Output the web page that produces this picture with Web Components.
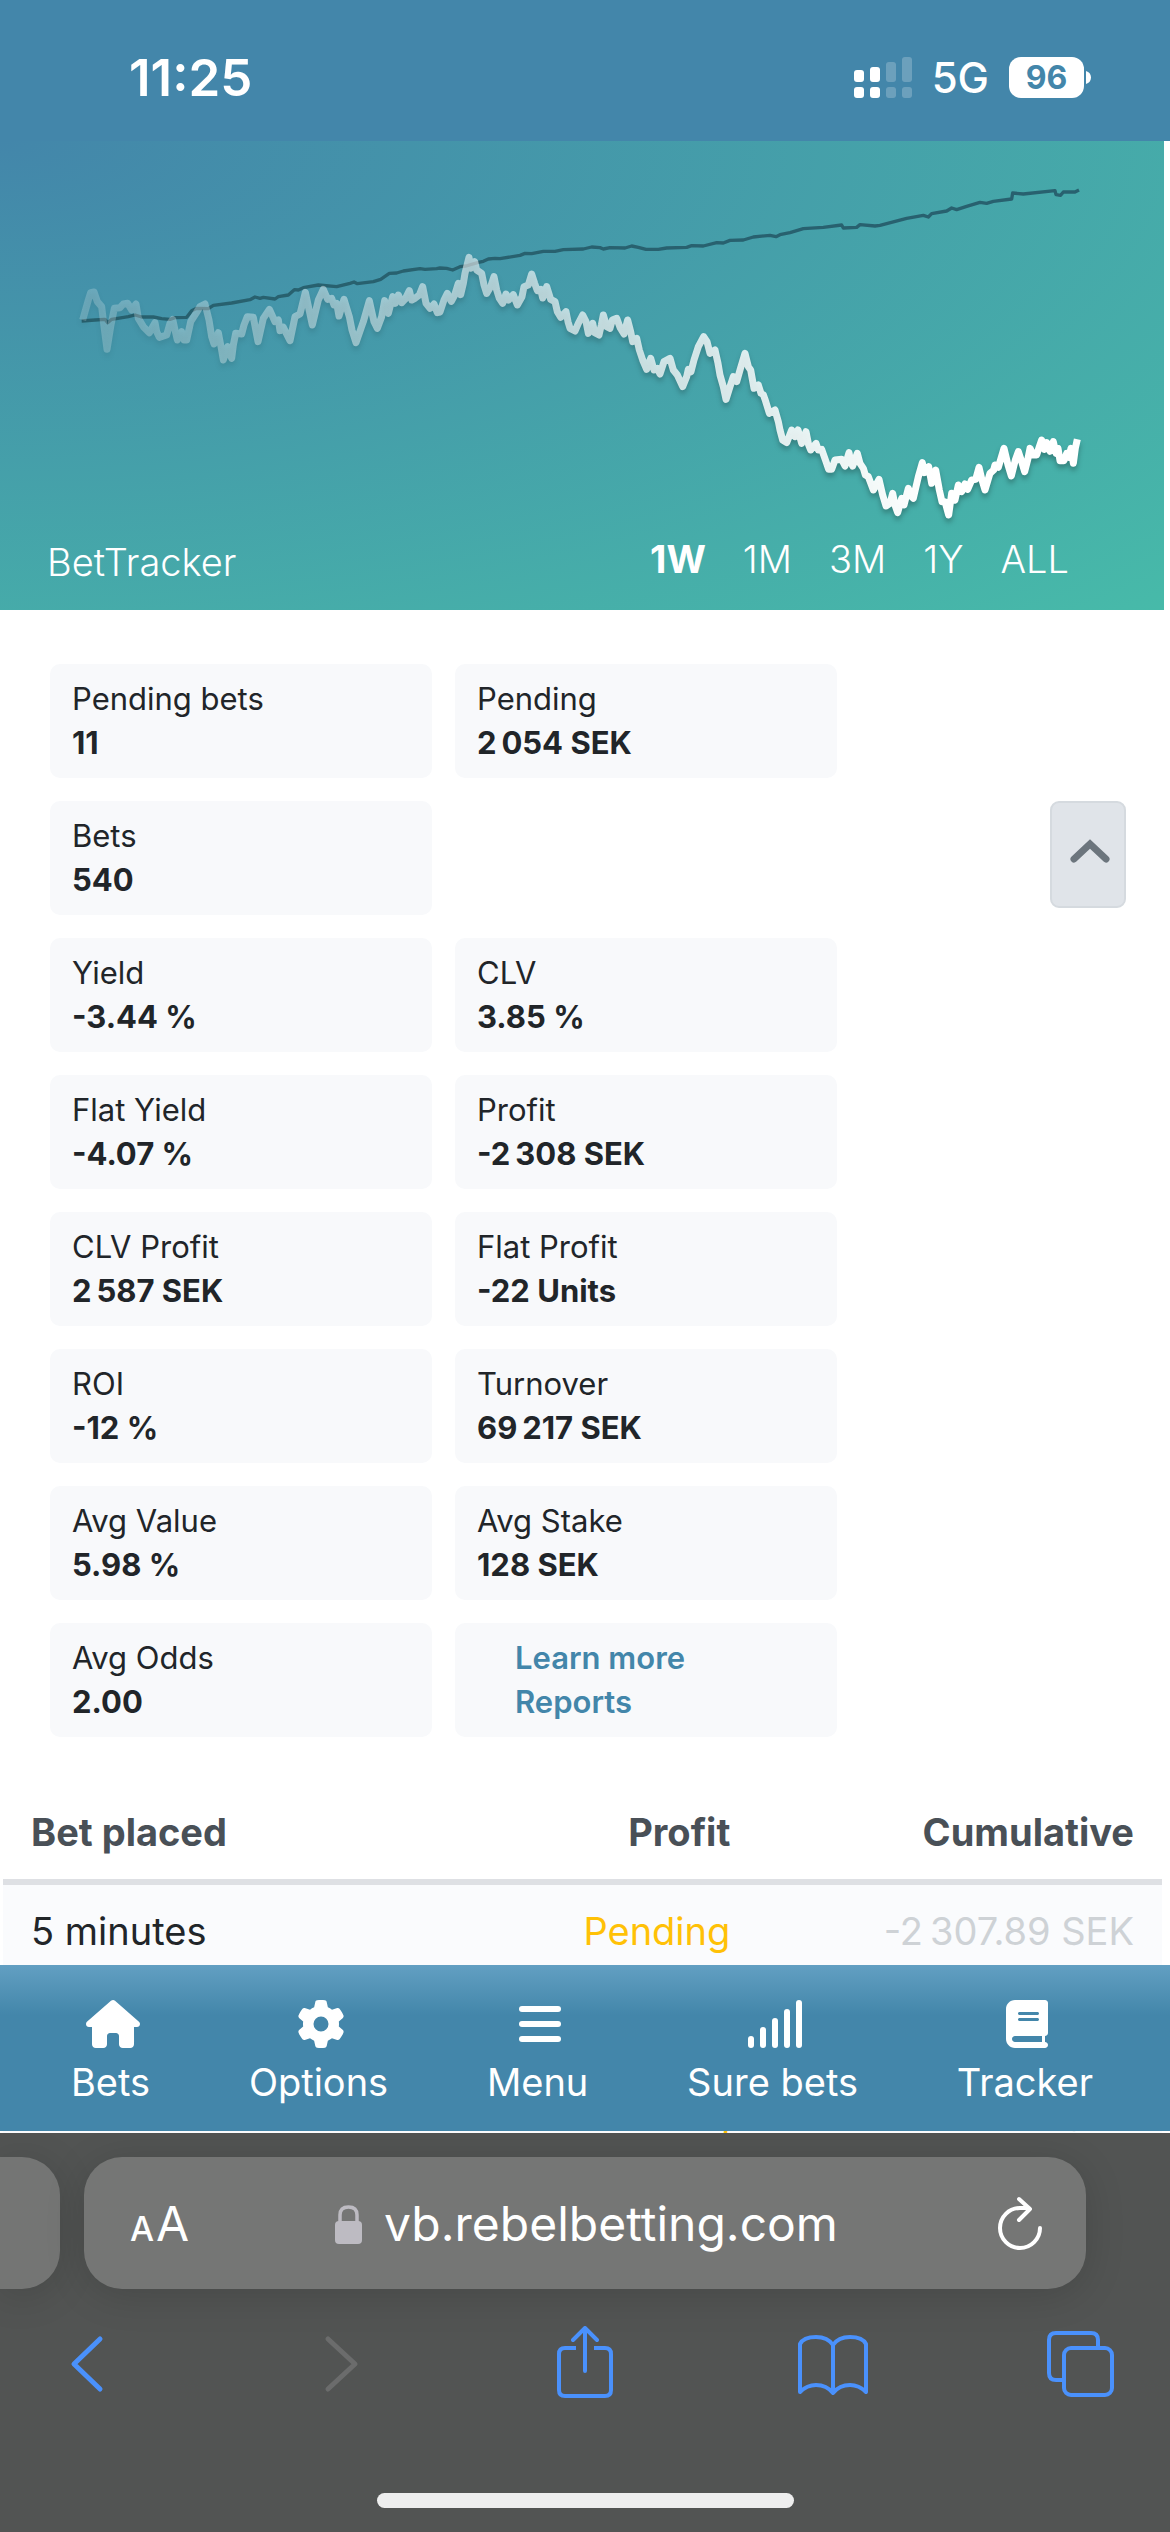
<!DOCTYPE html>
<html lang="en">
<head>
<meta charset="utf-8">
<meta name="viewport" content="width=device-width, initial-scale=1">
<title>BetTracker</title>
<style>
  body { margin: 0; background: #fff; font-family: Inter, "Liberation Sans", sans-serif; color: #212529; }
</style>
</head>
<body>
<tracker-screen></tracker-screen>

<script>
const define = (name, markup, setup) => {
  const template = document.createElement('template');
  template.innerHTML = markup;
  customElements.define(name, class extends HTMLElement {
    constructor() {
      super();
      this.attachShadow({ mode: 'open' }).append(template.content.cloneNode(true));
    }
    connectedCallback() { if (setup) setup(this, this.shadowRoot); }
  });
};

/* ---------- Phone status bar ---------- */
define('status-bar', `
<style>
  :host { display: flex; align-items: center; justify-content: space-between; height: 141px; padding: 14px 79px 0 129px; box-sizing: border-box; background: #4386aa; color: #fff; }
  time { font-size: 51px; font-weight: 600; line-height: 60px; }
  .right { display: flex; align-items: center; gap: 20px; }
  .net { font-size: 42px; font-weight: 500; line-height: 50px; }
  .battery { display: flex; align-items: center; gap: 2px; }
  .level { width: 75px; border-radius: 12px; background: #fff; color: #4386aa; font-size: 32px; font-weight: 700; line-height: 41px; text-align: center; }
  svg { display: block; }
</style>
<time>11:25</time>
<div class="right">
  <svg width="58" height="41" viewBox="0 0 58 41" fill="#fff" aria-hidden="true">
    <rect y="13" width="10" height="12" rx="3"/><rect x="16" y="10" width="10" height="15" rx="3"/>
    <rect y="30" width="10" height="11" rx="3"/><rect x="16" y="30" width="10" height="11" rx="3"/>
    <g opacity=".22"><rect x="32" y="5" width="10" height="20" rx="3"/><rect x="48" width="10" height="25" rx="3"/>
    <rect x="32" y="30" width="10" height="11" rx="3"/><rect x="48" y="30" width="10" height="11" rx="3"/></g>
  </svg>
  <span class="net">5G</span>
  <div class="battery"><div class="level">96</div>
    <svg width="5" height="13" viewBox="0 0 5 13" fill="#fff" aria-hidden="true"><path d="M0 0C3 1 5 3 5 6.500S3 12 0 13z"/></svg>
  </div>
</div>`);

/* ---------- Profit chart: x offset of each segment, then its points ---------- */
const expected = [
  [180, '65,543 105,540 135,538 143,548 155,538 205,530 225,525 245,531 280,531 305,536 330,538 345,533 380,532 395,512 410,505 445,506 460,496 515,489 570,479 585,471 600,475 610,472 645,477 655,470 685,465 703,449 715,450 730,443 775,435 830,440 870,430 882,426 892,431 940,425 962,418 988,400 1010,399 1030,393 1080,386 1095,388 1130,386'],
  [1320, '0,384 20,385 38,390 60,380 78,378 115,367 130,364 145,357 165,355 180,356 240,346 255,340 275,341 310,334 345,334 370,329 430,327 455,321 480,323 490,327 510,323 555,324 575,318 595,322 618,328 655,328 680,324 740,322 755,317 790,318 830,308 850,309 870,301 910,300 940,291 990,286 1008,290'],
  [2340, '0,284 30,278 70,266 130,262 185,255 190,264 230,262 240,254 285,258 300,256 380,235 430,226 445,231 455,221 500,213 515,204 530,209 560,199 600,187 620,190 640,184 695,177 698,159 730,162 825,152 828,164 842,166 850,156 885,156 897,150']
];
const actual = [
  [180, '68,540 85,480 92,458 102,456 112,485 125,500 132,560 141,628 152,560 163,505 180,503 190,492 203,490 215,510 228,492 235,535 250,560 268,578 285,548 290,575 298,592 320,585 330,550 338,538 345,570 352,600 365,575 372,600 380,600 392,545 408,520 420,500 435,492 447,540 455,590 462,612 475,578 484,625 490,660 503,620 515,655 520,615 527,580 545,582 552,555 562,530 580,532 594,605 610,535 628,508 645,545 655,540 660,572 670,562 690,602 705,530 720,522 736,457 757,555 775,480 790,448 803,478 815,475 822,495 830,490 837,528 852,478 868,530 876,570 888,608 910,545 928,482 942,545 952,565 965,530 974,482 985,520 998,470 1006,490 1015,465 1025,488 1035,478 1048,452 1055,480 1065,475 1078,465 1088,440 1098,490 1110,505 1122,492 1132,518'],
  [1320, '0,516 12,480 22,460 34,484 44,465 55,430 62,464 70,430 75,400 87,352 92,385 104,365 110,390 125,400 132,435 140,460 152,440 162,410 170,450 178,475 188,490 198,462 206,480 220,464 232,495 246,470 252,440 265,435 275,402 284,430 292,452 302,448 308,474 320,440 332,478 345,485 352,515 362,532 378,515 384,545 390,565 405,573 415,550 428,525 438,545 445,580 458,550 464,578 477,585 484,555 490,525 500,560 510,565 517,540 530,535 540,562 552,582 563,540 572,575 578,605 590,595 598,630 608,660 620,688 632,655 642,690 652,685 660,702 672,665 690,655 700,690 712,705 728,740 740,710 745,688 753,695 762,660 775,620 791,590 801,605 810,640 825,630 834,670 840,705 850,740 858,778 870,740 880,710 890,725 900,690 915,640 925,680 932,690 942,745 955,735 963,760 970,764'],
  [2340, '-45,778 -32,820 -15,810 -5,845 0,870 8,900 20,908 35,870 45,890 54,870 65,910 78,875 86,915 92,930 108,910 115,930 125,928 138,965 146,988 155,988 165,960 185,958 195,978 207,938 212,965 218,978 232,940 240,970 250,985 256,1005 265,1010 280,1050 297,1018 308,1065 318,1098 330,1090 338,1060 345,1095 353,1118 365,1075 372,1095 385,1045 393,1068 400,1075 415,1010 427,968 433,998 446,980 455,1030 467,990 478,1050 486,1085 495,1085 506,1125 515,1060 525,1080 535,1035 545,1055 555,1032 563,1048 575,1020 587,1018 597,982 606,1020 615,1050 630,1000 641,990 645,975 655,982 672,925 684,975 694,1008 706,960 715,935 725,965 734,995 743,960 750,925 760,945 770,945 778,920 785,900 793,928 800,908 810,934 820,905 828,940 834,925 840,962 852,962 860,940 867,952 873,925 880,970 886,925 892,898']
];
const tracePath = segments => 'M' + segments.flatMap(([dx, text]) =>
  text.split(' ').map(pair => { const [x, y] = pair.split(',').map(Number); return (x + dx) + ' ' + (y - 3); })).join('L');

define('profit-hero', `
<style>
  :host { display: grid; margin-right: 6px; background: radial-gradient(ellipse farthest-corner at top left, #4386aa, #47baa9); color: #fff; }
  svg, .bar { grid-area: 1 / 1; }
  svg { display: block; width: 100%; height: auto; }
  .white { filter: drop-shadow(0 12px 8px rgba(0,0,0,.25)); }
  .bar { align-self: end; display: flex; align-items: start; justify-content: space-between; padding: 0 95px 25px 47px; font-size: 38px; line-height: 46px; font-weight: 300; }
  h1 { margin: 3px 0 0; font: inherit; }
  .periods { display: flex; gap: 37px; }
  button { padding: 0; border: 0; background: none; color: inherit; font: inherit; }
  button[aria-pressed=true] { font-weight: 700; }
</style>
<svg viewBox="0 0 3492 1407" fill="none" stroke-linejoin="round" role="img" aria-label="Profit over time">
  <defs><linearGradient id="fade" gradientUnits="userSpaceOnUse" x1="240" y1="0" x2="2800" y2="0">
    <stop offset="0" stop-color="#fff" stop-opacity=".2"/><stop offset="1" stop-color="#fff"/></linearGradient></defs>
  <path id="expected" stroke="#28616f" stroke-width="10"/>
  <g class="white"><path id="actual" stroke="url(#fade)" stroke-width="21"/></g>
</svg>
<div class="bar">
  <h1>BetTracker</h1>
  <div class="periods">
    <button type="button" aria-pressed="true">1W</button><button type="button">1M</button><button type="button">3M</button><button type="button">1Y</button><button type="button">ALL</button>
  </div>
</div>`, (host, root) => {
  root.getElementById('expected').setAttribute('d', tracePath(expected));
  root.getElementById('actual').setAttribute('d', tracePath(actual));
});

/* ---------- Statistics ---------- */
define('stat-card', `
<style>
  :host { display: block; padding: 13px 22px; border-radius: 10px; background: #f8f9fb; font-size: 31px; line-height: 44px; }
  .value { font-weight: 700; }
</style>
<div><slot name="label"></slot></div>
<div class="value"><slot></slot></div>`);

define('report-card', `
<style>
  :host { display: flex; flex-direction: column; align-items: start; padding: 13px 60px; border-radius: 10px; background: #f8f9fb; font-size: 31px; line-height: 44px; font-weight: 600; }
  a { color: #4386aa; text-decoration: none; }
</style>
<a href="#learn">Learn more</a>
<a href="#reports">Reports</a>`);

define('stat-grid', `
<style>
  :host { display: grid; grid-template-columns: 382fr 382fr 266fr; gap: 23px; padding: 54px 44px 49px 50px; }
  .first { grid-column: 1; }
  button { grid-column: 3; justify-self: end; display: grid; place-items: center; width: 76px; height: 107px; box-sizing: border-box; padding: 0 0 8px 4px; border: 2px solid #d5dadf; border-radius: 9px; background: #e0e4e9; }
</style>
<stat-card><span slot="label">Pending bets</span>11</stat-card>
<stat-card><span slot="label">Pending</span>2&#8239;054 SEK</stat-card>
<stat-card class="first"><span slot="label">Bets</span>540</stat-card>
<button type="button" aria-label="Hide statistics"><svg width="40" height="24" viewBox="0 0 40 24" fill="none" stroke="#6c757d" stroke-width="7" stroke-linecap="round" stroke-linejoin="miter"><path d="M4 20 20 5 36 20"/></svg></button>
<stat-card class="first"><span slot="label">Yield</span>-3.44 %</stat-card>
<stat-card><span slot="label">CLV</span>3.85 %</stat-card>
<stat-card class="first"><span slot="label">Flat Yield</span>-4.07 %</stat-card>
<stat-card><span slot="label">Profit</span>-2&#8239;308 SEK</stat-card>
<stat-card class="first"><span slot="label">CLV Profit</span>2&#8239;587 SEK</stat-card>
<stat-card><span slot="label">Flat Profit</span>-22 Units</stat-card>
<stat-card class="first"><span slot="label">ROI</span>-12 %</stat-card>
<stat-card><span slot="label">Turnover</span>69&#8239;217 SEK</stat-card>
<stat-card class="first"><span slot="label">Avg Value</span>5.98 %</stat-card>
<stat-card><span slot="label">Avg Stake</span>128 SEK</stat-card>
<stat-card class="first"><span slot="label">Avg Odds</span>2.00</stat-card>
<report-card></report-card>`);

/* ---------- Bets table ---------- */
define('bet-table', `
<style>
  :host { display: block; padding: 0 8px 0 3px; font-size: 38px; line-height: 57px; }
  table { width: 100%; border-collapse: separate; border-spacing: 0; table-layout: fixed; }
  th, td { padding: 18px 28px; text-align: right; white-space: nowrap; }
  th { color: #495057; font-weight: 700; border-bottom: 6px solid #dee0e4; }
  th:first-child, td:first-child { text-align: left; width: 30%; }
  th:last-child { width: 30%; }
  tbody tr:nth-child(odd) { background: #fafbfd; }
  .pending { color: #ffc107; }
  .sum { color: #ced2d6; }
</style>
<table>
  <thead><tr><th>Bet placed</th><th>Profit</th><th>Cumulative</th></tr></thead>
  <tbody>
    <tr><td>5 minutes</td><td class="pending">Pending</td><td class="sum">-2&#8239;307.89 SEK</td></tr>
    <tr><td>&nbsp;</td><td class="pending"></td><td class="sum"></td></tr>
    <tr><td>8 minutes</td><td class="pending">Pending</td><td class="sum">-2&#8239;307.89 SEK</td></tr>
  </tbody>
</table>`);

/* ---------- App navigation ---------- */
define('nav-item', `
<style>
  :host { display: block; }
  a { display: flex; flex-direction: column; align-items: center; gap: 11px; color: #fff; text-decoration: none; font-size: 38px; line-height: 46px; white-space: nowrap; }
  ::slotted(svg) { display: block; margin-left: 5px; }
</style>
<a href="#"><slot name="icon"></slot><slot></slot></a>`);

define('app-nav', `
<style>
  :host { display: block; background: linear-gradient(#629fc2, #4386aa 50px); }
  nav { display: flex; justify-content: space-between; padding: 35px 77px 26px 71px; }
</style>
<nav>
  <nav-item><svg slot="icon" width="54" height="48" viewBox="0 0 576 512" fill="#fff"><path d="M575.8 255.500c0 18-15 32.100-32 32.100h-32l.7 160.200c0 2.700-.2 5.400-.5 8.100V472c0 22.100-17.900 40-40 40H392c-22.100 0-40-17.900-40-40V384c0-17.700-14.300-32-32-32H256c-17.700 0-32 14.300-32 32v88c0 22.100-17.900 40-40 40H104c-22.100 0-40-17.900-40-40V287.600H32c-18 0-32-14-32-32.100 0-9 3-17 10-24L266.400 8c7-7 15-8 22-8s15 2 21 7L564.800 231.500c8 7 12 15 11 24z"/></svg>Bets</nav-item>
  <nav-item><svg slot="icon" width="48" height="48" viewBox="0 0 512 512" fill="#fff"><path d="M495.900 166.600c3.200 8.700 .5 18.400-6.400 24.600l-43.300 39.400c1.100 8.300 1.700 16.800 1.700 25.400s-.6 17.100-1.700 25.400l43.300 39.400c6.900 6.200 9.600 15.900 6.400 24.600c-4.400 11.900-9.700 23.300-15.800 34.300l-4.700 8.100c-6.600 11-14 21.400-22.100 31.200c-5.900 7.200-15.700 9.600-24.500 6.800l-55.700-17.700c-13.400 10.300-28.200 18.900-44 25.400l-12.500 57.100c-2 9.100-9 16.300-18.200 17.800c-13.800 2.300-28 3.500-42.500 3.500s-28.700-1.200-42.500-3.500c-9.200-1.500-16.200-8.700-18.200-17.800l-12.500-57.100c-15.800-6.500-30.600-15.100-44-25.400L83.100 425.900c-8.800 2.800-18.600 .3-24.500-6.800c-8.100-9.800-15.500-20.200-22.100-31.200l-4.700-8.100c-6.100-11-11.400-22.400-15.800-34.300c-3.200-8.700-.5-18.400 6.400-24.600l43.300-39.400C64.600 273.100 64 264.600 64 256s.6-17.100 1.700-25.400L22.400 191.200c-6.900-6.200-9.600-15.900-6.400-24.600c4.400-11.900 9.700-23.300 15.800-34.300l4.700-8.100c6.600-11 14-21.400 22.100-31.200c5.900-7.200 15.700-9.600 24.500-6.800l55.700 17.700c13.400-10.300 28.200-18.900 44-25.400l12.500-57.100c2-9.100 9-16.300 18.200-17.800C227.300 1.200 241.500 0 256 0s28.700 1.200 42.500 3.500c9.200 1.500 16.200 8.700 18.200 17.800l12.500 57.100c15.800 6.500 30.600 15.100 44 25.400l55.700-17.700c8.800-2.800 18.600-.3 24.500 6.800c8.100 9.800 15.500 20.200 22.100 31.200l4.700 8.100c6.100 11 11.400 22.400 15.800 34.300zM256 336a80 80 0 1 0 0-160 80 80 0 1 0 0 160z"/></svg>Options</nav-item>
  <nav-item><svg slot="icon" width="42" height="48" viewBox="0 0 42 48" fill="#fff"><rect y="6" width="42" height="6" rx="3"/><rect y="21" width="42" height="6" rx="3"/><rect y="36" width="42" height="6" rx="3"/></svg>Menu</nav-item>
  <nav-item><svg slot="icon" width="54" height="48" viewBox="0 0 54 48" fill="#fff"><rect y="36" width="6" height="12" rx="3"/><rect x="12" y="27" width="6" height="21" rx="3"/><rect x="24" y="18" width="6" height="30" rx="3"/><rect x="36" y="9" width="6" height="39" rx="3"/><rect x="48" width="6" height="48" rx="3"/></svg>Sure bets</nav-item>
  <nav-item><svg slot="icon" width="42" height="48" viewBox="0 0 448 512" fill="#fff"><path d="M96 0C43 0 0 43 0 96V416c0 53 43 96 96 96H384h32c17.700 0 32-14.300 32-32s-14.300-32-32-32V384c17.700 0 32-14.300 32-32V32c0-17.700-14.300-32-32-32H384 96zm0 384H384v64H96c-17.700 0-32-14.300-32-32s14.300-32 32-32zm32-240c0-8.800 7.200-16 16-16H336c8.800 0 16 7.200 16 16s-7.200 16-16 16H144c-8.800 0-16-7.200-16-16zm16 48H336c8.800 0 16 7.200 16 16s-7.200 16-16 16H144c-8.800 0-16-7.200-16-16s7.200-16 16-16z"/></svg>Tracker</nav-item>
</nav>`);

/* ---------- Browser chrome ---------- */
define('browser-bar', `
<style>
  :host { display: block; padding-bottom: 24px; background: #525453; }
  button { display: flex; padding: 0; border: 0; background: none; color: #fff; font: inherit; }
  svg { display: block; }
  .top { display: flex; gap: 24px; padding: 24px 84px 0 0; }
  .tab { width: 60px; border-radius: 0 38px 38px 0; background: #747574; box-shadow: 0 6px 40px rgba(0,0,0,.14); }
  .address { flex: 1; display: flex; align-items: center; justify-content: space-between; height: 132px; padding: 2px 44px 0 46px; box-sizing: border-box; border-radius: 38px; background: #757675; box-shadow: 0 6px 40px rgba(0,0,0,.14); }
  .size { align-items: baseline; gap: 2px; font-size: 34px; font-weight: 500; line-height: 40px; }
  .size span { font-size: 48px; font-weight: 400; line-height: 60px; }
  .url { display: flex; align-items: center; gap: 22px; }
  input { width: 468px; padding: 0; border: 0; background: none; color: #fff; font: 400 48px/60px Inter, "Liberation Sans", sans-serif; }
  .tools { display: flex; align-items: center; justify-content: space-between; padding: 37px 54px 0 50px; }
  .home { width: 417px; height: 15px; margin: 95px auto 0; border-radius: 8px; background: #eee; }
</style>
<div class="top">
  <div class="tab"></div>
  <div class="address">
    <button class="size" type="button" aria-label="Page settings">A<span>A</span></button>
    <div class="url">
      <svg width="27" height="39" viewBox="0 0 27 39" aria-hidden="true"><rect y="16" width="27" height="23" rx="4" fill="#bdbbc2"/><path d="M5 17v-7C5 5 8 2 13.500 2S22 5 22 10v7" fill="none" stroke="#bdbbc2" stroke-width="3.500"/></svg>
      <input type="text" value="vb.rebelbetting.com" aria-label="Address">
    </div>
    <button type="button" aria-label="Reload"><svg width="44" height="56" viewBox="0 0 44 56" fill="none" stroke="#fff" stroke-width="4" stroke-linecap="round" stroke-linejoin="round"><path d="M42 32a20 20 0 1 1-20-20h9M21 3 32 13 21 24"/></svg></button>
  </div>
</div>
<div class="tools">
  <button type="button" aria-label="Back"><svg width="72" height="72" viewBox="0 0 72 72" fill="none" stroke="#4a91fc" stroke-width="5" stroke-linecap="round" stroke-linejoin="round"><path d="M50 13 24 38l26 25"/></svg></button>
  <button type="button" aria-label="Forward" disabled><svg width="72" height="72" viewBox="0 0 72 72" fill="none" stroke="#6b6c6c" stroke-width="5" stroke-linecap="round" stroke-linejoin="round"><path d="M29 13 56 38 29 63"/></svg></button>
  <button type="button" aria-label="Share"><svg width="72" height="72" viewBox="0 0 72 72" fill="none" stroke="#4a91fc" stroke-width="4" stroke-linecap="round" stroke-linejoin="round"><path stroke-linecap="butt" d="M29 22H18q-6 0-6 6v36q0 6 6 6h40q6 0 6-6V28q0-6-6-6H47"/><path d="M38 45V2M26 14 38 2l12 12"/></svg></button>
  <button type="button" aria-label="Bookmarks"><svg width="72" height="72" viewBox="0 0 72 72" fill="none" stroke="#4a91fc" stroke-width="4" stroke-linejoin="round"><path d="M37 19C33 13 27 11 20 11 12 11 6 14 4 18V66C9 61 14 59 20 59c7 0 13 3 17 8 4-5 10-8 17-8 6 0 11 2 16 7V18C68 14 62 11 54 11c-7 0-13 2-17 8zV66"/></svg></button>
  <button type="button" aria-label="Tabs"><svg width="72" height="72" viewBox="0 0 72 72" fill="none" stroke="#4a91fc" stroke-width="4"><path d="M19 54h-7q-7 0-7-7V14q0-7 7-7h35q7 0 7 7v7"/><rect x="20" y="22" width="48" height="47" rx="7"/></svg></button>
</div>
<div class="home"></div>`);

/* ---------- Whole screen ---------- */
define('tracker-screen', `
<style>
  :host { display: flex; flex-direction: column; height: 100vh; }
  main { position: relative; flex: 1; min-height: 0; overflow: hidden; }
  app-nav { position: absolute; left: 0; right: 0; bottom: 2px; }
</style>
<status-bar></status-bar>
<main>
  <profit-hero></profit-hero>
  <stat-grid></stat-grid>
  <bet-table></bet-table>
  <app-nav></app-nav>
</main>
<browser-bar></browser-bar>`);
</script>
</body>
</html>
